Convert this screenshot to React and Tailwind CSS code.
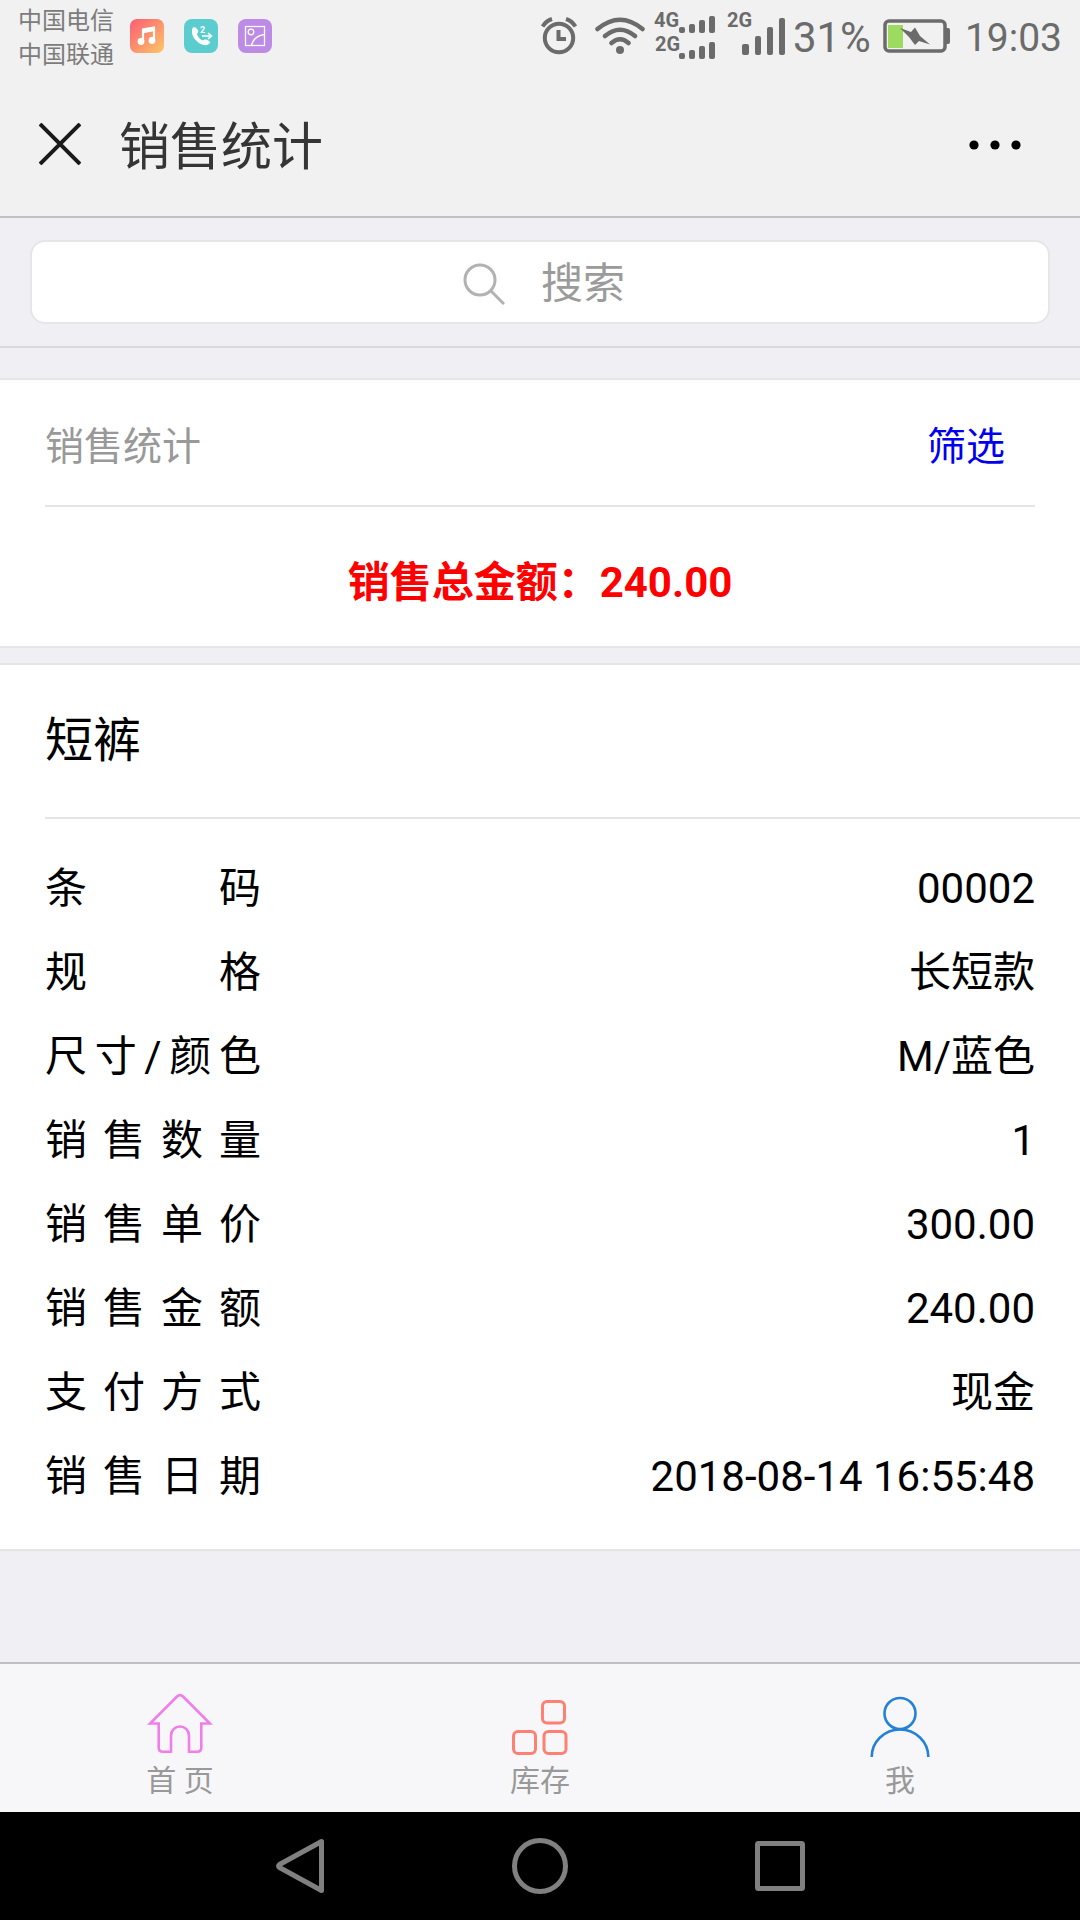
const details = [
  ['条码', '00002'],
  ['规格', '长短款'],
  ['尺寸/颜色', 'M/蓝色'],
  ['销售数量', '1'],
  ['销售单价', '300.00'],
  ['销售金额', '240.00'],
  ['支付方式', '现金'],
  ['销售日期', '2018-08-14 16:55:48'],
]

function StatusBar() {
  return (
    <div className="h-[72px] pl-[18px] pr-[18px] flex items-center text-[#6b6b6b]">
      <div className="pt-1 text-[24px] leading-[34px] text-[#7c7c7c]">
        <p>中国电信</p>
        <p>中国联通</p>
      </div>
      <div className="ml-4 flex gap-5">
        <svg className="w-[34px] h-[34px]" viewBox="0 0 34 34">
          <defs>
            <linearGradient id="music" x1="0" y1="0" x2="1" y2="1">
              <stop offset="0" stopColor="#fb5c74" />
              <stop offset="1" stopColor="#fcc766" />
            </linearGradient>
          </defs>
          <rect width="34" height="34" rx="7" fill="url(#music)" />
          <path d="M13 22V10.500L24 8.500V20" fill="none" stroke="#fff" strokeWidth="2.200" />
          <path d="M12 10.500L25 8V12L12 14.500Z" fill="#fff" />
          <circle cx="11" cy="22.500" r="3.400" fill="#fff" />
          <circle cx="22" cy="21.500" r="3.400" fill="#fff" />
        </svg>
        <svg className="w-[34px] h-[34px]" viewBox="0 0 34 34">
          <rect width="34" height="34" rx="8" fill="#5bcdcf" />
          <path d="M9 8.500C11 7.500 13 9 14 11.500C15 13.500 13 14 13 15.500C14 18 16 20.500 18.500 21.500C20 21 21.500 20 23 21C26 22 26.500 23 25.500 24.500C23 27 19 26.500 15 24C11 21 8 17 8 13C8 11 8 9.500 9 8.500Z" fill="#fff" />
          <path d="M18 17H27M24 14L27.500 17L24 20" fill="none" stroke="#fff" strokeWidth="1.600" />
          <text x="16" y="14" fill="#fff" className="text-[9px] font-bold">2</text>
        </svg>
        <svg className="w-[34px] h-[34px]" viewBox="0 0 34 34" fill="none" stroke="#fff" strokeWidth="1.300">
          <rect width="34" height="34" rx="8" fill="#bd8ae6" stroke="none" />
          <rect x="7.500" y="7.500" width="19" height="19" />
          <circle cx="13" cy="13" r="2.800" />
          <path d="M13.500 26.500C15 20 19 16.500 26.500 15.500" />
        </svg>
      </div>

      <svg className="ml-auto w-9 h-[38px]" viewBox="0 0 36 38" fill="none" stroke="currentColor" strokeWidth="4">
        <circle cx="18" cy="21" r="14.200" />
        <path d="M17.500 13V22H25" />
        <path d="M1.500 9.500Q5 4 11 2M34.500 9.500Q31 4 25 2" />
      </svg>
      <svg className="ml-[18px] w-[50px] h-[38px]" viewBox="0 0 50 38" fill="none" stroke="currentColor" strokeWidth="4.500" strokeLinecap="round">
        <path d="M2.500 12Q25 -6.500 47.500 12M10 19Q25 6.500 40 19M16.500 26Q25 18.500 33.500 26" />
        <circle cx="25" cy="33" r="4" fill="currentColor" stroke="none" />
      </svg>
      <svg className="ml-2 w-[62px] h-[72px]" viewBox="0 0 62 72" fill="currentColor">
        <text x="1" y="27" className="text-[20px] font-bold">4G</text>
        <text x="2" y="51" className="text-[20px] font-bold">2G</text>
        <rect x="26" y="27" width="6" height="6" rx="2" />
        <rect x="36" y="24" width="6" height="9" rx="2" />
        <rect x="46" y="20" width="6" height="13" rx="2" />
        <rect x="56" y="16" width="6" height="17" rx="2" />
        <rect x="26" y="53" width="6" height="6" rx="2" />
        <rect x="36" y="50" width="6" height="9" rx="2" />
        <rect x="46" y="46" width="6" height="13" rx="2" />
        <rect x="56" y="42" width="6" height="17" rx="2" />
      </svg>
      <svg className="ml-3 w-[58px] h-[72px]" viewBox="0 0 58 72" fill="currentColor">
        <text x="0" y="27" className="text-[20px] font-bold">2G</text>
        <rect x="15" y="44" width="7" height="11" rx="2" />
        <rect x="28" y="36" width="6" height="19" rx="2" />
        <rect x="40" y="27" width="6" height="28" rx="2" />
        <rect x="52" y="18" width="6" height="37" rx="2" />
      </svg>
      <span className="ml-2 pt-1 text-[42px] leading-[72px]">31%</span>
      <svg className="ml-3 w-[68px] h-[34px]" viewBox="0 0 68 34">
        <rect x="2" y="2" width="60" height="30" rx="4" fill="none" stroke="currentColor" strokeWidth="3.500" />
        <path d="M63 9H65Q67 9 67 11V23Q67 25 65 25H63Z" fill="currentColor" />
        <rect x="5" y="6" width="15" height="23" fill="#9cdb60" />
        <path d="M17 9L28 13L32 8.500L37 17L47 25.500L36 22L32 26L26 18Z" fill="currentColor" />
      </svg>
      <span className="ml-[14px] pt-1 text-[39px] leading-[72px]">19:03</span>
    </div>
  )
}

function TitleBar() {
  return (
    <header className="h-36 pl-[39px] pr-[59px] flex items-center">
      <button type="button" aria-label="关闭">
        <svg className="w-[42px] h-[42px]" viewBox="0 0 42 42" stroke="#1a1a1a" strokeWidth="4">
          <path d="M1 1L41 41M41 1L1 41" />
        </svg>
      </button>
      <h1 className="ml-[38px] pt-2 text-[51px] leading-[72px] text-[#353535]">销售统计</h1>
      <button type="button" aria-label="更多" className="ml-auto pt-[2px]">
        <svg className="w-[52px] h-[10px]" viewBox="0 0 52 10">
          <circle cx="5" cy="5" r="4.600" />
          <circle cx="26" cy="5" r="4.600" />
          <circle cx="47" cy="5" r="4.600" />
        </svg>
      </button>
    </header>
  )
}

function SearchBar() {
  return (
    <form className="h-[132px] px-[30px] flex items-center border-y-2 border-t-[#c0c0c5] border-b-[#d9d9de]">
      <label className="flex-1 h-[84px] pt-1 flex items-center justify-center gap-9 bg-white border-2 border-[#e6e6ea] rounded-[15px]">
        <svg className="w-[50px] h-[42px]" viewBox="0 0 50 42" fill="none" stroke="#b2b2b2" strokeWidth="3">
          <circle cx="25" cy="17" r="15" />
          <path d="M36 28L49 41" />
        </svg>
        <input type="text" aria-label="搜索" placeholder="搜索" className="w-[84px] text-[42px] leading-[60px] outline-none placeholder:text-[#9b9b9b]" />
      </label>
    </form>
  )
}

function TabBar() {
  return (
    <nav className="h-[150px] pt-7 grid grid-cols-3 bg-[#f7f7fa] border-t-2 border-[#c0c0c4] text-[30px] leading-[46px] text-[#999]">
      <a href="#home" className="flex flex-col items-center">
        <svg className="w-[66px] h-[66px]" viewBox="0 0 66 66" fill="none" stroke="#f07de9" strokeWidth="2.600">
          <path d="M30 4.500Q33 1.500 36 4.500L63 31.500H54.300V55.500Q54.300 59.700 50 59.700H42V43.500A9 9 0 0 0 24 43.500V59.700H16Q11.700 59.700 11.700 55.500V31.500H3Z" />
        </svg>
        首 页
      </a>
      <a href="#stock" className="flex flex-col items-center">
        <svg className="w-[66px] h-[66px]" viewBox="0 0 66 66" fill="none" stroke="#fd8072" strokeWidth="3">
          <rect x="35.500" y="9.500" width="22" height="21.500" rx="4.500" />
          <rect x="6.500" y="39.500" width="22" height="22" rx="4.500" />
          <rect x="37" y="39.500" width="22" height="22" rx="4.500" />
        </svg>
        库存
      </a>
      <a href="#me" className="flex flex-col items-center">
        <svg className="w-[66px] h-[66px]" viewBox="0 0 66 66" fill="none" stroke="#2481d7" strokeWidth="2.600">
          <circle cx="33" cy="21.500" r="15.500" />
          <path d="M4.700 65A28.300 27.500 0 0 1 61.300 65" />
        </svg>
        我
      </a>
    </nav>
  )
}

function SystemNav() {
  return (
    <div className="h-[108px] flex items-center justify-center bg-black">
      <button type="button" aria-label="返回" className="w-60 flex justify-center">
        <svg className="w-14 h-14" viewBox="0 0 56 56" fill="none" stroke="#808080" strokeWidth="5" strokeLinejoin="round">
          <path d="M49.500 3.500V52.500L7.500 29.500Q5.500 28 7.500 26.500Z" />
        </svg>
      </button>
      <button type="button" aria-label="主屏幕" className="w-60 flex justify-center">
        <svg className="w-14 h-14" viewBox="0 0 56 56" fill="none" stroke="#808080" strokeWidth="5">
          <circle cx="28" cy="28" r="25.500" />
        </svg>
      </button>
      <button type="button" aria-label="最近任务" className="w-60 flex justify-center">
        <svg className="w-14 h-14" viewBox="0 0 56 56" fill="none" stroke="#808080" strokeWidth="5" strokeLinejoin="round">
          <rect x="5.500" y="5.500" width="45" height="45" rx="1" />
        </svg>
      </button>
    </div>
  )
}

export default function App() {
  return (
    <div className="min-h-screen flex flex-col bg-[#efeff4] text-black font-[Roboto,'Noto_Sans_CJK_SC',sans-serif]">
      <div className="bg-[#f1f1f1]">
        <StatusBar />
        <TitleBar />
      </div>
      <main className="flex-1">
        <SearchBar />

        <section className="mt-[30px] px-[45px] bg-white border-y-2 border-[#e5e5e7]">
          <div className="h-[127px] pt-2 pr-[30px] flex items-center justify-between border-b-2 border-[#e5e5e5] text-[39px] leading-[60px]">
            <h2 className="text-[#999]">销售统计</h2>
            <a href="#filter" className="text-[#0000ee]">筛选</a>
          </div>
          <p className="pt-[46px] pb-[33px] text-center text-[42px] leading-[60px] font-bold text-[#ff0000]">销售总金额：240.00</p>
        </section>

        <section className="mt-[15px] bg-white border-y-2 border-[#e5e5e7]">
          <h2 className="ml-[45px] py-10 border-b-2 border-[#e5e5e5] text-[48px] leading-[72px]">短裤</h2>
          <dl className="px-[45px] pt-7 pb-[30px] text-[42px] leading-[84px]">
            {details.map(([label, value]) => (
              <div key={label} className="flex justify-between">
                <dt className="w-[216px] [text-align-last:justify]">{label}</dt>
                <dd>{value}</dd>
              </div>
            ))}
          </dl>
        </section>
      </main>
      <TabBar />
      <SystemNav />
    </div>
  )
}
